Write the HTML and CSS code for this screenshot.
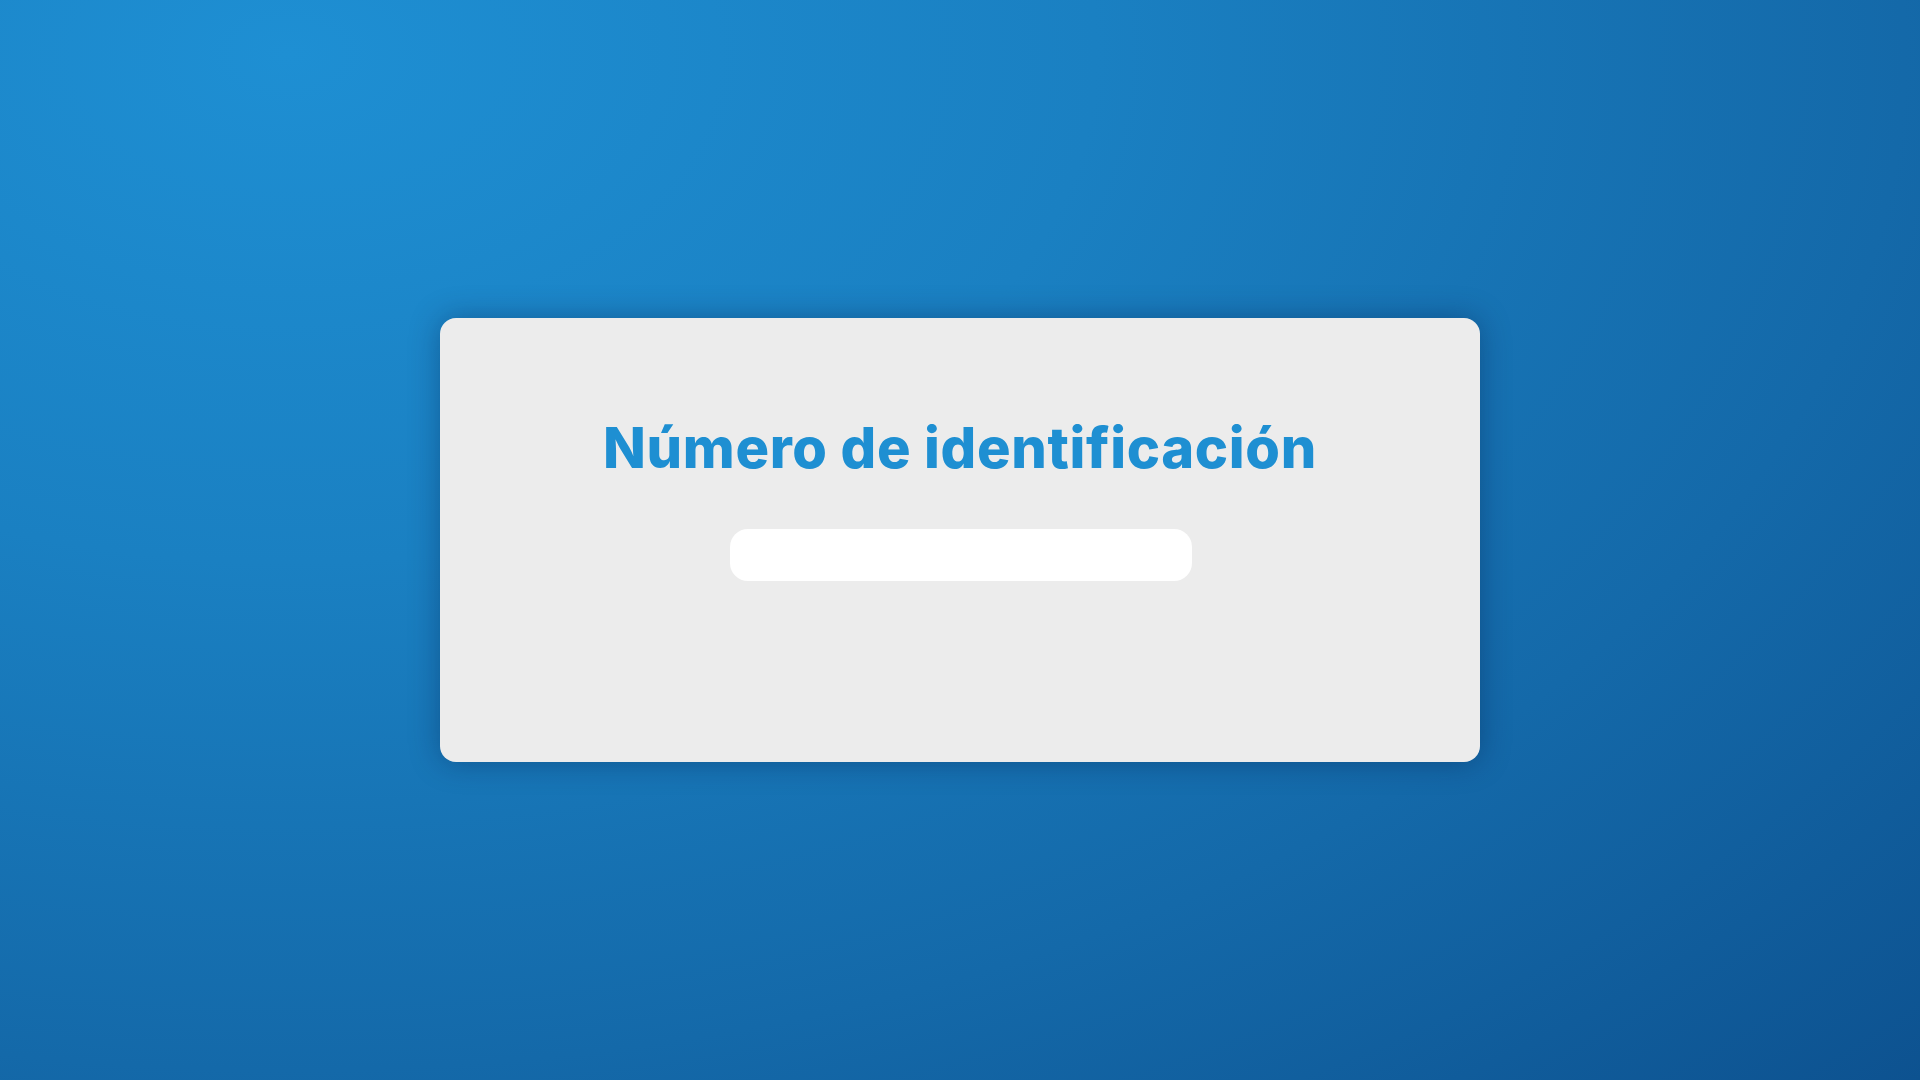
FILE: index.html
```html
<!DOCTYPE html>
<html lang="es">
<head>
<meta charset="utf-8">
<title>Número de identificación</title>
<link rel="stylesheet" href="styles.css">
</head>
<body>
<main class="page">
  <section class="card">
    <h1 class="title">Número de identificación</h1>
    <input class="field" type="text" aria-label="Número de identificación">
  </section>
</main>
</body>
</html>
```

FILE: styles.css
```css
html, body {
  margin: 0;
  padding: 0;
  height: 100%;
}
body {
  background: radial-gradient(ellipse farthest-corner at 15% 5%, #1e8fd3 0%, #1a80c2 35%, #1469a9 70%, #0d5290 100%);
  font-family: "Inter", "Open Sans", sans-serif;
}
.page {
  height: 100vh;
  display: flex;
  align-items: center;
  justify-content: center;
}
.card {
  box-sizing: border-box;
  width: 1040px;
  height: 444px;
  background: #ececec;
  border-radius: 16px;
  box-shadow: 0 0 30px rgba(0, 20, 60, 0.35);
  display: flex;
  flex-direction: column;
  align-items: center;
  padding-top: 96px;
}
.title {
  margin: 0;
  font-size: 56px;
  line-height: 68px;
  font-weight: 800;
  color: #1e8fd2;
  letter-spacing: 0.65px;
}
.field {
  box-sizing: border-box;
  margin-top: 47px;
  width: 462px;
  height: 52px;
  border: none;
  border-radius: 18px;
  background: #ffffff;
  outline: none;
  margin-left: 2px;
}
```
